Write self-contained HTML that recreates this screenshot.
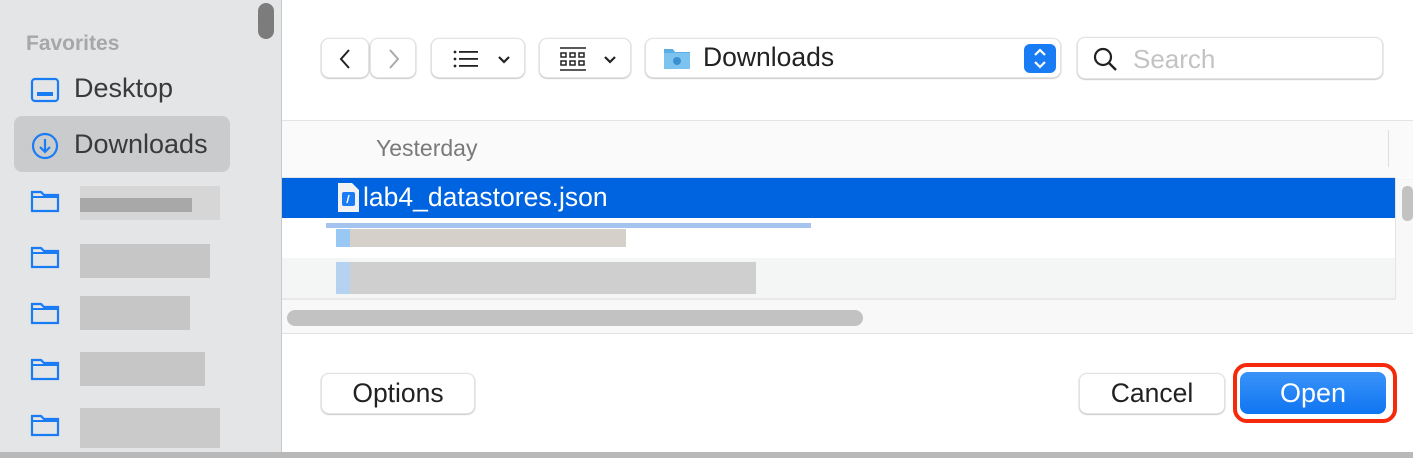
<!DOCTYPE html>
<html><head><style>
body{margin:0;width:1413px;height:458px;overflow:hidden;font-family:"Liberation Sans",sans-serif;background:#fff;position:relative}
.a{position:absolute}
.side{left:0;top:0;width:281px;height:452px;background:#e4e5e7;border-right:1px solid #c9c9c9}
.btn{position:absolute;background:#fff;border-radius:8px;box-shadow:0 0.5px 1.5px rgba(0,0,0,.35);border:1px solid #e3e3e3;box-sizing:border-box}
.blur{position:absolute;background:#b4b4b4}
</style></head><body>
<div class="a side">
 <div class="a" style="left:258px;top:3px;width:16px;height:36px;background:#7c7c7c;border-radius:8px"></div>
 <div class="a" style="left:26px;top:32px;font-size:21px;font-weight:bold;color:#a6a7a9">Favorites</div>
 <svg class="a" style="left:30px;top:77px" width="30" height="26"><rect x="2" y="2" width="26" height="22" rx="3" fill="none" stroke="#1a7cf4" stroke-width="2.2"/><rect x="7" y="15" width="16" height="4" fill="#1a7cf4"/></svg>
 <div class="a" style="left:74px;top:73px;font-size:27px;color:#3a3a3a">Desktop</div>
 <div class="a" style="left:14px;top:116px;width:216px;height:56px;background:#cacbcd;border-radius:8px"></div>
 <svg class="a" style="left:31px;top:132px" width="28" height="28"><circle cx="14" cy="14" r="12" fill="none" stroke="#1a7cf4" stroke-width="2.2"/><path d="M14 7v13M9 15l5 5 5-5" fill="none" stroke="#1a7cf4" stroke-width="2.2"/></svg>
 <div class="a" style="left:74px;top:129px;font-size:27px;color:#3a3a3a">Downloads</div>
 <div class="a" style="top:187px;left:30px">
  <svg width="30" height="26"><path d="M2 5h9l3 3h14v16H2z" fill="none" stroke="#1a7cf4" stroke-width="2.2"/><path d="M2 10h26" stroke="#1a7cf4" stroke-width="2"/></svg></div>
 <div class="blur" style="left:80px;top:186px;width:140px;height:34px;background:#d6d6d6"></div>
 <div class="blur" style="left:80px;top:198px;width:112px;height:14px;background:#a8a8a8"></div>
 <div class="a" style="top:243px;left:30px"><svg width="30" height="26"><path d="M2 5h9l3 3h14v16H2z" fill="none" stroke="#1a7cf4" stroke-width="2.2"/><path d="M2 10h26" stroke="#1a7cf4" stroke-width="2"/></svg></div>
 <div class="blur" style="left:80px;top:244px;width:130px;height:34px;background:#c6c6c6"></div>
 <div class="a" style="top:299px;left:30px"><svg width="30" height="26"><path d="M2 5h9l3 3h14v16H2z" fill="none" stroke="#1a7cf4" stroke-width="2.2"/><path d="M2 10h26" stroke="#1a7cf4" stroke-width="2"/></svg></div>
 <div class="blur" style="left:80px;top:296px;width:110px;height:34px;background:#c6c6c6"></div>
 <div class="a" style="top:355px;left:30px"><svg width="30" height="26"><path d="M2 5h9l3 3h14v16H2z" fill="none" stroke="#1a7cf4" stroke-width="2.2"/><path d="M2 10h26" stroke="#1a7cf4" stroke-width="2"/></svg></div>
 <div class="blur" style="left:80px;top:352px;width:125px;height:34px;background:#c6c6c6"></div>
 <div class="a" style="top:411px;left:30px"><svg width="30" height="26"><path d="M2 5h9l3 3h14v16H2z" fill="none" stroke="#1a7cf4" stroke-width="2.2"/><path d="M2 10h26" stroke="#1a7cf4" stroke-width="2"/></svg></div>
 <div class="blur" style="left:80px;top:408px;width:140px;height:40px;background:#cacaca"></div>
</div>
<!-- toolbar -->
<div class="btn" style="left:321px;top:38px;width:48px;height:40px"><svg style="position:absolute;left:14px;top:9px" width="20" height="22"><path d="M13 2L5 11l8 9" fill="none" stroke="#222" stroke-width="2"/></svg></div>
<div class="btn" style="left:370px;top:38px;width:46px;height:40px"><svg style="position:absolute;left:13px;top:9px" width="20" height="22"><path d="M6 2l8 9-8 9" fill="none" stroke="#aaa" stroke-width="2"/></svg></div>
<div class="btn" style="left:431px;top:38px;width:94px;height:40px"><svg style="position:absolute;left:20px;top:9px" width="60" height="22"><g fill="#222"><circle cx="3" cy="4" r="1.4"/><circle cx="3" cy="11" r="1.4"/><circle cx="3" cy="18" r="1.4"/><rect x="7" y="3" width="19" height="1.8"/><rect x="7" y="10" width="19" height="1.8"/><rect x="7" y="17" width="19" height="1.8"/></g><path d="M47 9l5 5 5-5" fill="none" stroke="#222" stroke-width="2.2"/></svg></div>
<div class="btn" style="left:539px;top:38px;width:92px;height:40px"><svg style="position:absolute;left:18px;top:6px" width="64" height="28"><g fill="none" stroke="#222" stroke-width="1.5"><path d="M2 3h26M2 25h26"/><rect x="3" y="8" width="5" height="4"/><rect x="12" y="8" width="5" height="4"/><rect x="21" y="8" width="5" height="4"/><rect x="3" y="16" width="5" height="4"/><rect x="12" y="16" width="5" height="4"/><rect x="21" y="16" width="5" height="4"/></g><path d="M47 12l5 5 5-5" fill="none" stroke="#222" stroke-width="2.2"/></svg></div>
<div class="btn" style="left:645px;top:38px;width:416px;height:40px">
 <svg style="position:absolute;left:17px;top:7px" width="28" height="24"><path d="M1 3h9l2 3h15v17H1z" fill="#5aaee6"/><rect x="1" y="7" width="26" height="16" fill="#7cc3f0"/><circle cx="14" cy="15" r="4" fill="#3d8fd1"/></svg>
 <div class="a" style="left:57px;top:3px;font-size:26.5px;color:#222">Downloads</div>
 <div class="a" style="left:378px;top:5px;width:32px;height:29px;background:#1a7cf4;border-radius:6px"><svg width="32" height="29"><path d="M11 11l5-5 5 5M11 18l5 5 5-5" fill="none" stroke="#fff" stroke-width="2.2"/></svg></div>
</div>
<div class="btn" style="left:1077px;top:37px;width:306px;height:42px">
 <svg style="position:absolute;left:14px;top:8px" width="28" height="28"><circle cx="11" cy="11" r="8" fill="none" stroke="#222" stroke-width="2.2"/><path d="M17 17l7 7" stroke="#222" stroke-width="2.4"/></svg>
 <div class="a" style="left:55px;top:6px;font-size:26px;color:#c3c3c3">Search</div>
</div>
<!-- list -->
<div class="a" style="left:282px;top:120px;width:1131px;height:1px;background:#e4e4e4"></div>
<div class="a" style="left:282px;top:121px;width:1131px;height:56px;background:#fafafa"></div>
<div class="a" style="left:376px;top:135px;font-size:23px;color:#7a7a7a">Yesterday</div>
<div class="a" style="left:1388px;top:130px;width:1px;height:37px;background:#dedede"></div>
<div class="a" style="left:282px;top:177px;width:1113px;height:1px;background:#e4e4e4"></div>
<div class="a" style="left:282px;top:178px;width:1113px;height:40px;background:#0064e1"></div>
<svg class="a" style="left:334px;top:182px" width="28" height="32"><path d="M4 1h14l7 7v22H4z" fill="#f2f2f2"/><rect x="8" y="10" width="13" height="14" rx="2" fill="#1a7cf4"/><path d="M15 13l-2 8" stroke="#fff" stroke-width="1.5"/></svg>
<div class="a" style="left:363px;top:182px;font-size:26.5px;color:#fff">lab4_datastores.json</div>
<div class="a" style="left:282px;top:258px;width:1113px;height:40px;background:#f4f5f5"></div>
<div class="a" style="left:1395px;top:178px;width:1px;height:120px;background:#e4e4e4"></div>
<div class="a" style="left:282px;top:298px;width:1114px;height:2px;background:#e8e8e8"></div>
<div class="a" style="left:1396px;top:178px;width:17px;height:155px;background:#f8f8f8"></div>
<div class="a" style="left:1402px;top:186px;width:11px;height:35px;background:#c2c2c2;border-radius:5px"></div>
<div class="a" style="left:326px;top:223px;width:485px;height:5px;background:#a5c3ef"></div>
<div class="a" style="left:336px;top:229px;width:290px;height:18px;background:#d6d0ca"></div>
<div class="a" style="left:336px;top:229px;width:14px;height:18px;background:#9ac8f5"></div>
<div class="a" style="left:336px;top:262px;width:420px;height:32px;background:#cfcfcf"></div>
<div class="a" style="left:336px;top:262px;width:14px;height:32px;background:#b5d3f1"></div>
<div class="a" style="left:282px;top:300px;width:1114px;height:33px;background:#f8f8f8"></div>
<div class="a" style="left:287px;top:310px;width:576px;height:16px;background:#c2c2c2;border-radius:8px"></div>
<div class="a" style="left:282px;top:333px;width:1131px;height:1px;background:#e2e2e2"></div>
<!-- bottom -->
<div class="btn" style="left:321px;top:373px;width:154px;height:41px;font-size:26.5px;color:#222;text-align:center;line-height:39px">Options</div>
<div class="btn" style="left:1079px;top:373px;width:146px;height:41px;font-size:26.5px;color:#222;text-align:center;line-height:39px">Cancel</div>
<div class="a" style="left:1233px;top:363px;width:164px;height:60px;border:4px solid #f52a0c;border-radius:14px;box-sizing:border-box"></div>
<div class="a" style="left:1240px;top:372px;width:146px;height:42px;background:linear-gradient(#3a93f8,#1075f2);border-radius:8px;font-size:27px;color:#fff;text-align:center;line-height:42px">Open</div>
<div class="a" style="left:0;top:452px;width:1413px;height:6px;background:#b9b9b9"></div>
</body></html>
